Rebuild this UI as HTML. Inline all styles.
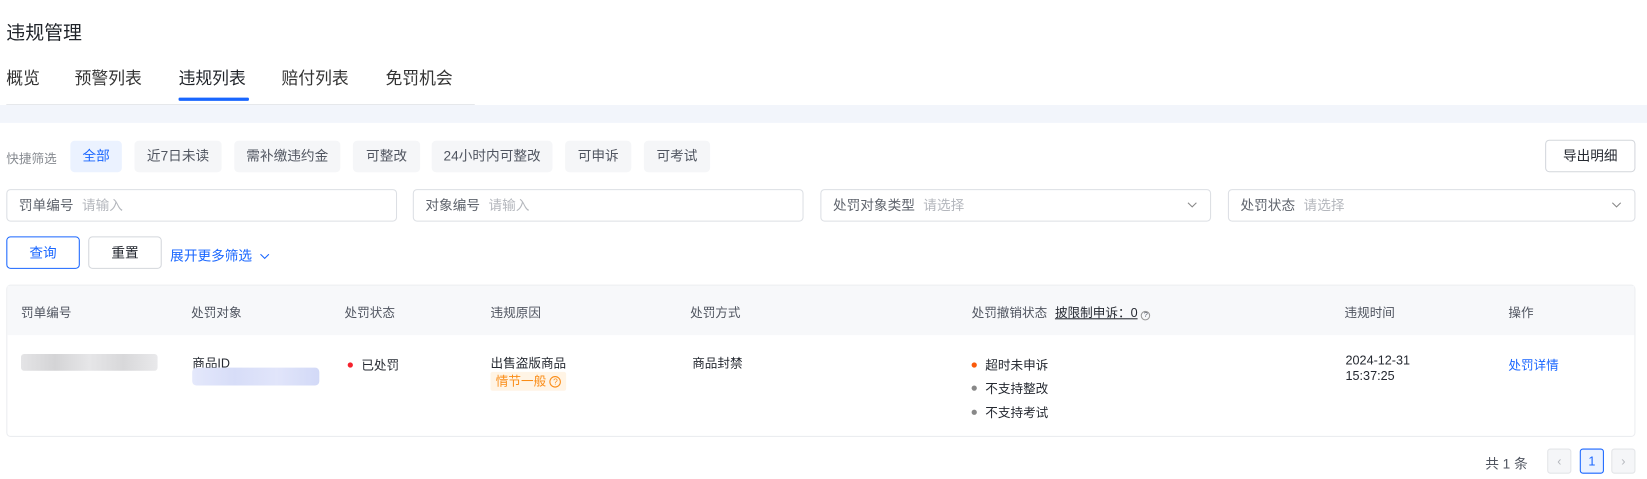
<!DOCTYPE html>
<html><head><meta charset="utf-8"><style>
*{margin:0;padding:0;box-sizing:border-box}
body{width:1647px;height:479px;background:#fff;font-family:"Liberation Sans","Noto Sans CJK SC",sans-serif;color:#252931;position:relative;overflow:hidden}
#w{position:absolute;left:0;top:0;width:1568px;height:456px;transform:scale(1.05038);transform-origin:0 0}
.a{position:absolute;white-space:nowrap}
.chip{position:absolute;top:134px;height:30px;line-height:30px;font-size:13px;background:#f5f6f8;border-radius:4px;text-align:center;color:#505560}
.inp{position:absolute;top:180px;height:31px;border:1px solid #dcdfe4;border-radius:4px;font-size:13px;line-height:29px;padding-left:11px;color:#5e636c}
.inp span{color:#b4b7bd;margin-left:8px}
.btn{position:absolute;top:225px;height:31px;border:1px solid #d4d7dc;border-radius:4px;font-size:13px;line-height:29px;text-align:center}
.th{position:absolute;top:289px;font-size:12px;color:#505560}
.td{position:absolute;font-size:12px;color:#252931}
.dot{display:inline-block;width:5px;height:5px;border-radius:50%;margin-right:8px;vertical-align:middle;position:relative;top:-1px}
.pg{position:absolute;top:427px;width:23px;height:24px;border:1px solid #e3e5e8;border-radius:3px;background:#f5f6f8;text-align:center;line-height:22px;font-size:12px;color:#b4b7bd}
</style></head><body><div id="w">
<div class="a" style="left:6px;top:17px;font-size:18px;color:#1f2329">违规管理</div>
<div class="a" style="left:6px;top:61px;font-size:16px;color:#333">概览</div>
<div class="a" style="left:71px;top:61px;font-size:16px;color:#333">预警列表</div>
<div class="a" style="left:170px;top:61px;font-size:16px;color:#1f2329">违规列表</div>
<div class="a" style="left:268px;top:61px;font-size:16px;color:#333">赔付列表</div>
<div class="a" style="left:367px;top:61px;font-size:16px;color:#333">免罚机会</div>
<div class="a" style="left:6px;top:99px;width:446px;height:1px;background:#e6e8eb"></div>
<div class="a" style="left:170px;top:93px;width:67px;height:3px;background:#1966ff;border-radius:1px"></div>
<div class="a" style="left:0;top:100px;width:1568px;height:17px;background:#f2f5fb"></div>

<div class="a" style="left:6px;top:142px;font-size:12px;color:#85898f">快捷筛选</div>
<div class="chip" style="left:67px;width:49px;background:#ebf2ff;color:#1966ff">全部</div>
<div class="chip" style="left:128px;width:83px">近7日未读</div>
<div class="chip" style="left:223px;width:101px">需补缴违约金</div>
<div class="chip" style="left:336px;width:64px">可整改</div>
<div class="chip" style="left:411px;width:115px">24小时内可整改</div>
<div class="chip" style="left:538px;width:63px">可申诉</div>
<div class="chip" style="left:613px;width:63px">可考试</div>
<div class="btn" style="left:1471px;top:133px;width:86px;color:#252931">导出明细</div>

<div class="inp" style="left:6px;width:372px">罚单编号<span>请输入</span></div>
<div class="inp" style="left:393px;width:372px">对象编号<span>请输入</span></div>
<div class="inp" style="left:781px;width:372px">处罚对象类型<span>请选择</span><svg class="a" style="right:12px;top:10px" width="10" height="8"><path d="M1 2l4 4 4-4" stroke="#888" fill="none"/></svg></div>
<div class="inp" style="left:1169px;width:388px">处罚状态<span>请选择</span><svg class="a" style="right:12px;top:10px" width="10" height="8"><path d="M1 2l4 4 4-4" stroke="#888" fill="none"/></svg></div>

<div class="btn" style="left:6px;width:70px;border-color:#1966ff;color:#1966ff">查询</div>
<div class="btn" style="left:84px;width:70px;color:#252931">重置</div>
<div class="a" style="left:162px;top:233px;font-size:13px;color:#1966ff">展开更多筛选 <svg width="10" height="8" style="margin-left:3px"><path d="M1 2l4 4 4-4" stroke="#1966ff" fill="none"/></svg></div>

<div class="a" style="left:6px;top:271px;width:1551px;height:145px;border:1px solid #ebedf0;border-radius:4px"></div>
<div class="a" style="left:7px;top:272px;width:1549px;height:47px;background:#f7f8fa"></div>
<div class="th" style="left:20px">罚单编号</div>
<div class="th" style="left:182px">处罚对象</div>
<div class="th" style="left:328px">处罚状态</div>
<div class="th" style="left:467px">违规原因</div>
<div class="th" style="left:657px">处罚方式</div>
<div class="th" style="left:925px">处罚撤销状态 <span style="color:#252931;text-decoration:underline;margin-left:4px">披限制申诉：0</span> <span style="display:inline-block;width:9px;height:9px;border:1px solid #999;border-radius:50%;font-size:7px;line-height:7px;text-align:center">?</span></div>
<div class="th" style="left:1280px">违规时间</div>
<div class="th" style="left:1436px">操作</div>

<div class="a" style="left:20px;top:337px;width:130px;height:16px;background:linear-gradient(90deg,#e4e4e6,#d4d4d6,#e6e6e8,#d8d8da,#e9e9eb);border-radius:3px"></div>
<div class="td" style="left:183px;top:337px">商品ID</div>
<div class="a" style="left:183px;top:350px;width:121px;height:17px;background:linear-gradient(90deg,#e4e8fb,#d7ddf8,#e1e5fa,#d2d9f7);border-radius:4px"></div>
<div class="td" style="left:331px;top:339px"><span class="dot" style="background:#f5222d"></span>已处罚</div>
<div class="td" style="left:467px;top:337px">出售盗版商品</div>
<div class="a" style="left:467px;top:354px;width:72px;height:18px;background:#fff4e5;color:#fa8c16;font-size:12px;line-height:18px;padding-left:5px;border-radius:2px">情节一般 <span style="display:inline-block;width:11px;height:11px;border:1px solid #fa8c16;border-radius:50%;font-size:8px;line-height:9px;text-align:center;vertical-align:middle">?</span></div>
<div class="td" style="left:659px;top:337px">商品封禁</div>
<div class="td" style="left:925px;top:339px"><span class="dot" style="background:#fa5a0a"></span>超时未申诉</div>
<div class="td" style="left:925px;top:361px"><span class="dot" style="background:#888"></span>不支持整改</div>
<div class="td" style="left:925px;top:384px"><span class="dot" style="background:#888"></span>不支持考试</div>
<div class="td" style="left:1281px;top:336px;line-height:15px">2024-12-31<br>15:37:25</div>
<div class="td" style="left:1436px;top:339px;color:#1966ff">处罚详情</div>

<div class="a" style="left:1414px;top:431px;font-size:13px;color:#505560">共 1 条</div>
<div class="pg" style="left:1473px">‹</div>
<div class="pg" style="left:1504px;background:#ebf2ff;border-color:#1966ff;color:#1966ff">1</div>
<div class="pg" style="left:1534px">›</div>
</div></body></html>
